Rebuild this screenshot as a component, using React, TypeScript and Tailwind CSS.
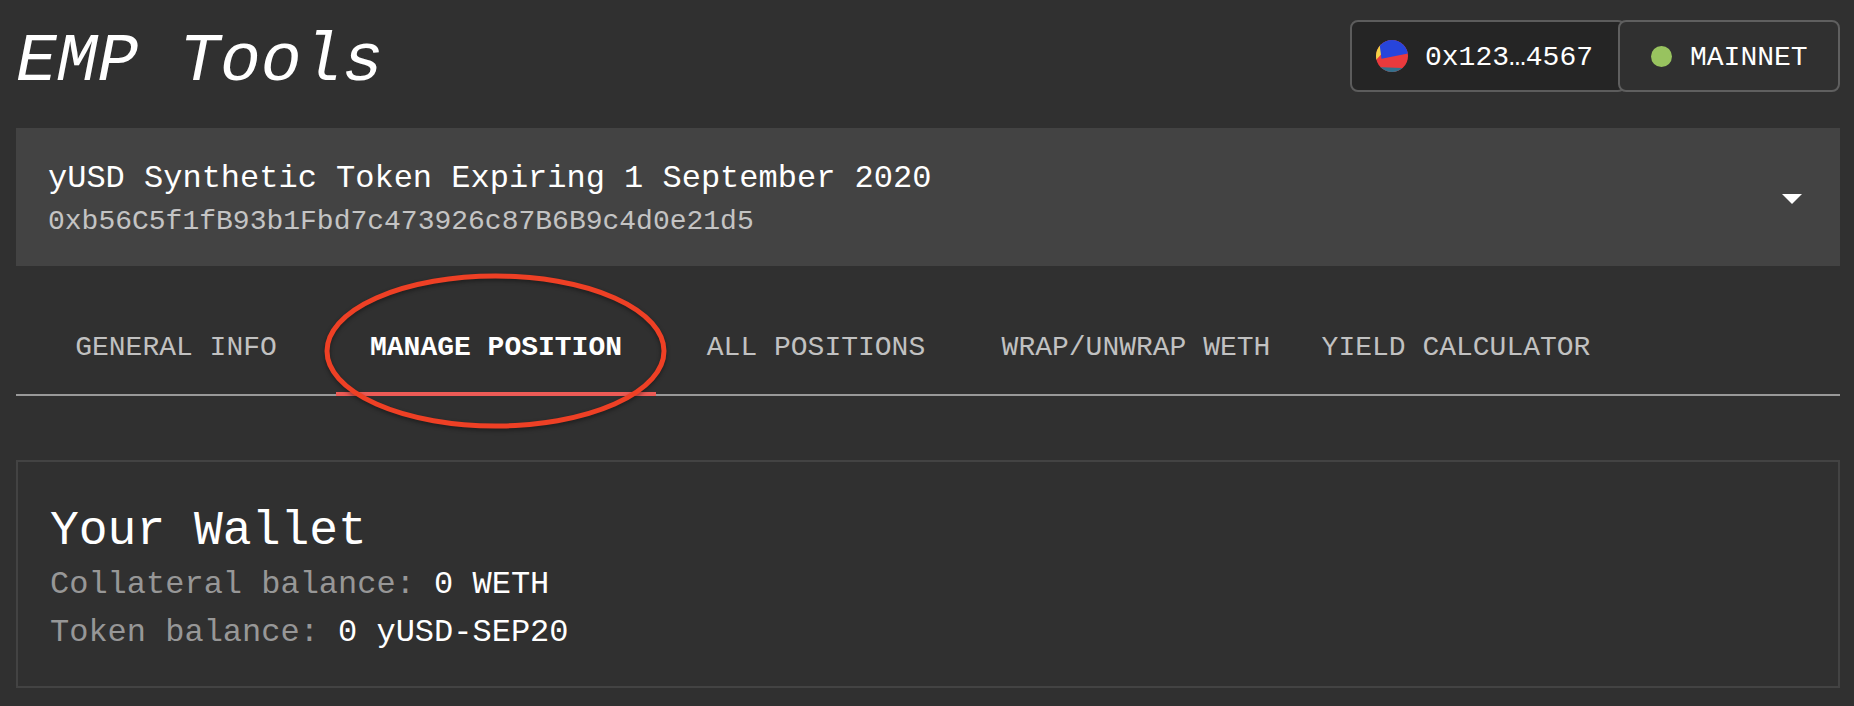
const tabs = ["General Info", "Manage Position", "All Positions", "Wrap/Unwrap WETH", "Yield Calculator"];

function Identicon() {
  return (
    <svg className="size-8 rounded-full" viewBox="0 0 32 32">
      <rect width="32" height="32" fill="#ea3a3d" />
      <path d="M0 0H4L5.5 14L0 20Z" fill="#f3d247" />
      <path d="M3 0H32V13.5L5.5 18.8Z" fill="#2745dc" />
      <path d="M0 27L32 28.3V32H0Z" fill="#33708c" />
    </svg>
  );
}

function Balance({ label, value }: { label: string; value: string }) {
  return (
    <p className="h-12 text-[32px] leading-[48px] text-white">
      <span className="text-[#979797]">{label}: </span>
      {value}
    </p>
  );
}

export default function App() {
  return (
    <div className="h-[706px] w-full overflow-hidden bg-[#303030] px-4 pr-[14px] pt-5 font-['Liberation_Mono',monospace] text-white">
      <header className="flex h-[108px] items-start justify-between">
        <h1 className="pt-1.5 text-[68px] leading-[72px] italic whitespace-pre">EMP Tools</h1>
        <div className="flex text-[28px]">
          <button className="-mr-2 flex h-[72px] w-[276px] items-center rounded-lg border-2 border-[#5c5c5c] bg-[#252525] pl-6">
            <Identicon />
            <span className="ml-[17px] pt-1">0x123…4567</span>
          </button>
          <button className="flex h-[72px] w-[222px] items-center rounded-lg border-2 border-[#5f5f5f] bg-[#303030] pl-[31px]">
            <span className="size-[21px] rounded-full bg-[#98c35f]" />
            <span className="ml-[18px] pt-1">MAINNET</span>
          </button>
        </div>
      </header>

      <section className="flex h-[138px] items-center justify-between bg-[#434343] pr-[38px] pl-8">
        <div className="pt-[5px]">
          <p className="text-[32px] leading-[44px]">yUSD Synthetic Token Expiring 1 September 2020</p>
          <p className="text-[28px] leading-[41px] text-[#c4c4c4]">0xb56C5f1fB93b1Fbd7c473926c87B6B9c4d0e21d5</p>
        </div>
        <svg className="mt-1 h-[10px] w-5" viewBox="0 0 20 10">
          <path d="M0 0H20L10 10Z" fill="#fff" />
        </svg>
      </section>

      <nav className="relative mt-[30px] flex h-[100px] border-b-2 border-[#999]">
        {tabs.map((tab, i) => (
          <button
            key={tab}
            className={
              i === 1
                ? "-mb-0.5 h-[100px] w-80 border-b-4 border-[#ec5b56] pt-2 text-[28px] font-bold uppercase"
                : "h-[98px] w-80 pt-1.5 text-[28px] text-[#c1c1c1] uppercase"
            }
          >
            {tab}
          </button>
        ))}
        <svg className="absolute -top-[29px] left-[300px] h-[170px] w-[360px] overflow-visible drop-shadow-[0_2px_2px_rgba(0,0,0,0.4)]" viewBox="0 0 360 170">
          <ellipse cx="179.5" cy="84" rx="168.5" ry="75" fill="none" stroke="#ee4025" strokeWidth="5" />
        </svg>
      </nav>

      <section className="mt-16 h-[228px] border-2 border-[#434343] px-8 pt-[39px]">
        <h2 className="h-[60px] text-[48px] leading-[60px]">Your Wallet</h2>
        <Balance label="Collateral balance" value="0 WETH" />
        <Balance label="Token balance" value="0 yUSD-SEP20" />
      </section>
    </div>
  );
}
